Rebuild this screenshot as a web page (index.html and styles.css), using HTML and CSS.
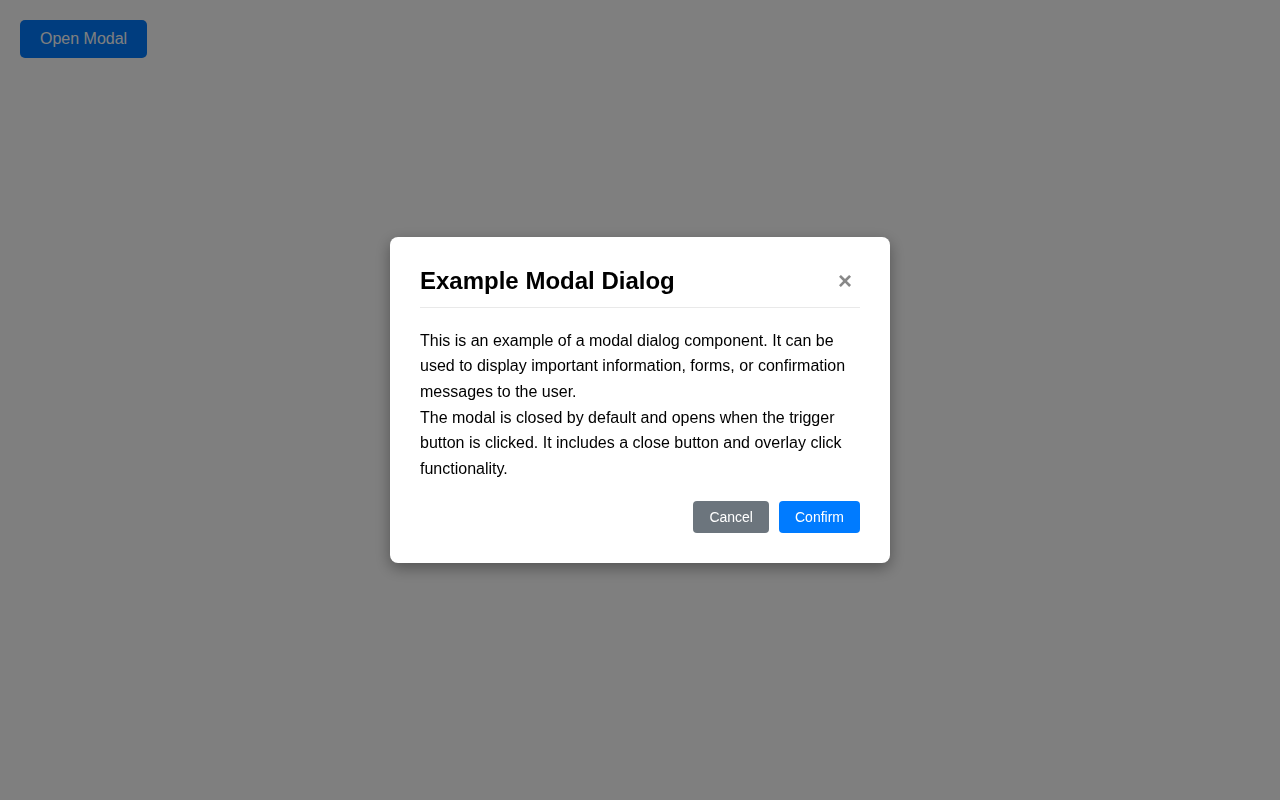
FILE: index.html
```html
<!DOCTYPE html>
<html lang="en">
<head>
<meta charset="utf-8">
<title>Modal</title>
<link rel="stylesheet" href="styles.css">
</head>
<body>
<div class="page">
  <button class="open-btn">Open Modal</button>
</div>
<div class="overlay">
  <div class="modal">
    <div class="modal-header">
      <h2 class="modal-title">Example Modal Dialog</h2>
      <button class="close-btn" aria-label="Close">&times;</button>
    </div>
    <div class="modal-body">
      <p>This is an example of a modal dialog component. It can be used to display important information, forms, or confirmation messages to the user.</p>
      <p>The modal is closed by default and opens when the trigger button is clicked. It includes a close button and overlay click functionality.</p>
    </div>
    <div class="modal-footer">
      <button class="btn btn-secondary">Cancel</button>
      <button class="btn btn-primary">Confirm</button>
    </div>
  </div>
</div>
</body>
</html>
```

FILE: styles.css
```css
* { box-sizing: border-box; }
html, body { margin: 0; height: 100%; }
body {
  font-family: "Liberation Sans", Arial, sans-serif;
  background: #fff;
  color: #000;
}
.page { padding: 20px; }
.open-btn {
  font-family: inherit;
  font-size: 16px;
  line-height: 18px;
  padding: 10px 20px;
  background: #007bff;
  color: #fff;
  border: none;
  border-radius: 5px;
}
.overlay {
  position: fixed;
  inset: 0;
  background: rgba(0, 0, 0, 0.5);
  display: flex;
  align-items: center;
  justify-content: center;
}
.modal {
  width: 500px;
  background: #fff;
  border-radius: 8px;
  padding: 30px;
  box-shadow: 0 5px 15px rgba(0, 0, 0, 0.35);
}
.modal-header {
  display: flex;
  justify-content: space-between;
  align-items: center;
  border-bottom: 1px solid #e9e9e9;
  padding-bottom: 12px;
  margin-bottom: 20px;
}
.modal-title {
  margin: 0;
  font-size: 24px;
  line-height: 28px;
  font-weight: bold;
}
.close-btn {
  background: none;
  border: none;
  font-family: inherit;
  font-size: 24px;
  line-height: 28px;
  font-weight: bold;
  color: #888;
  padding: 0 10px;
  width: 30px;
  display: flex;
  justify-content: center;
}
.modal-body p {
  margin: 0;
  font-size: 16px;
  line-height: 25.6px;
}
.modal-footer {
  display: flex;
  justify-content: flex-end;
  gap: 10px;
  margin-top: 20px;
}
.btn {
  font-family: inherit;
  font-size: 14px;
  line-height: 16px;
  padding: 8px 16px;
  border: none;
  border-radius: 4px;
  color: #fff;
}
.btn-secondary { background: #6c757d; }
.btn-primary { background: #007bff; }
```
